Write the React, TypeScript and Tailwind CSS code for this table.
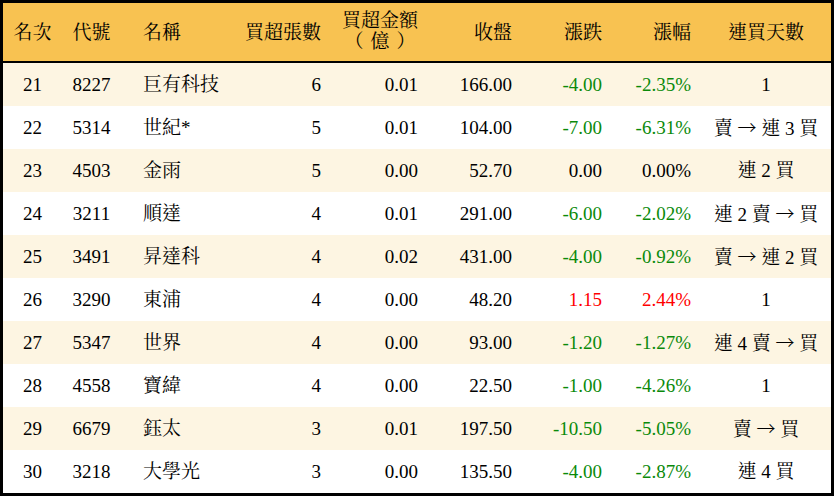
import React from 'react'

type Row = {
  rank: number
  code: string
  name: string
  lots: number
  amount: string
  close: string
  change: string
  pct: string
  days: string
}

const rows: Row[] = [
  { rank: 21, code: '8227', name: '巨有科技', lots: 6, amount: '0.01', close: '166.00', change: '-4.00', pct: '-2.35%', days: '1' },
  { rank: 22, code: '5314', name: '世紀*', lots: 5, amount: '0.01', close: '104.00', change: '-7.00', pct: '-6.31%', days: '賣 → 連 3 買' },
  { rank: 23, code: '4503', name: '金雨', lots: 5, amount: '0.00', close: '52.70', change: '0.00', pct: '0.00%', days: '連 2 買' },
  { rank: 24, code: '3211', name: '順達', lots: 4, amount: '0.01', close: '291.00', change: '-6.00', pct: '-2.02%', days: '連 2 賣 → 買' },
  { rank: 25, code: '3491', name: '昇達科', lots: 4, amount: '0.02', close: '431.00', change: '-4.00', pct: '-0.92%', days: '賣 → 連 2 買' },
  { rank: 26, code: '3290', name: '東浦', lots: 4, amount: '0.00', close: '48.20', change: '1.15', pct: '2.44%', days: '1' },
  { rank: 27, code: '5347', name: '世界', lots: 4, amount: '0.00', close: '93.00', change: '-1.20', pct: '-1.27%', days: '連 4 賣 → 買' },
  { rank: 28, code: '4558', name: '寶緯', lots: 4, amount: '0.00', close: '22.50', change: '-1.00', pct: '-4.26%', days: '1' },
  { rank: 29, code: '6679', name: '鈺太', lots: 3, amount: '0.01', close: '197.50', change: '-10.50', pct: '-5.05%', days: '賣 → 買' },
  { rank: 30, code: '3218', name: '大學光', lots: 3, amount: '0.00', close: '135.50', change: '-4.00', pct: '-2.87%', days: '連 4 買' },
]

// column widths add up to the 828px inside the border
const cols = 'grid grid-cols-[59px_59px_119px_91px_97px_94px_90px_89px_130px]'

const tone = (v: string) => {
  if (v.startsWith('-')) return 'text-[#0a8a0a]'
  if (/^0\.00/.test(v)) return 'text-black'
  return 'text-[#ff0000]'
}

// the arrow comes from the CJK font so it is full width like the reference
const Days = ({ text }: { text: string }) => {
  const parts = text.split('→')
  return (
    <>
      {parts.map((p, i) => (
        <React.Fragment key={i}>
          {i > 0 && <span className="font-['Noto_Sans_CJK_TC'] font-light">→</span>}
          {p}
        </React.Fragment>
      ))}
    </>
  )
}

export default function App() {
  return (
    <div className="w-[834px] h-[496px] bg-white">
      <div
        className="border-[3px] border-black text-[19px] leading-none text-black"
        style={{ fontFamily: '"Liberation Serif", "Noto Serif CJK TC", "Noto Sans CJK TC", serif' }}
      >
        <div className={`${cols} h-[60px] items-center bg-[#f8c251] border-b-2 border-black`}>
          <div className="text-center">名次</div>
          <div className="text-center">代號</div>
          <div className="pl-[22px]">名稱</div>
          <div className="text-right pr-[10px]">買超張數</div>
          <div className="flex justify-end pr-[10px]">
            <div className="text-center leading-[21px] -mt-[2px]">
              買超金額
              <br />
              （<span className="px-[7px]">億</span>）
            </div>
          </div>
          <div className="text-right pr-[10px]">收盤</div>
          <div className="text-right pr-[10px]">漲跌</div>
          <div className="text-right pr-[10px]">漲幅</div>
          <div className="text-center">連買天數</div>
        </div>

        {rows.map((r, i) => (
          <div
            key={r.rank}
            className={`${cols} h-[43px] items-center ${i % 2 === 0 ? 'bg-[#fdf5e2]' : 'bg-white'}`}
          >
            <div className="text-center">{r.rank}</div>
            <div className="text-center">{r.code}</div>
            <div className="pl-[22px]">{r.name}</div>
            <div className="text-right pr-[10px]">{r.lots}</div>
            <div className="text-right pr-[10px]">{r.amount}</div>
            <div className="text-right pr-[10px]">{r.close}</div>
            <div className={`text-right pr-[10px] ${tone(r.change)}`}>{r.change}</div>
            <div className={`text-right pr-[10px] ${tone(r.pct)}`}>{r.pct}</div>
            <div className="text-center whitespace-pre">
              <Days text={r.days} />
            </div>
          </div>
        ))}
      </div>
    </div>
  )
}
